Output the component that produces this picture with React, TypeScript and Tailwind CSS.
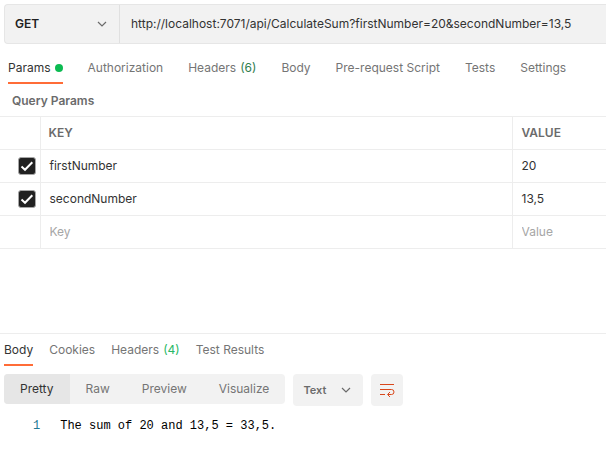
import React, { useState } from "react";

type Tab = { label: string; count?: number; dot?: boolean };
type Param = { key: string; value: string };

const requestTabs: Tab[] = [
  { label: "Params", dot: true },
  { label: "Authorization" },
  { label: "Headers", count: 6 },
  { label: "Body" },
  { label: "Pre-request Script" },
  { label: "Tests" },
  { label: "Settings" },
];

const responseTabs: Tab[] = [
  { label: "Body" },
  { label: "Cookies" },
  { label: "Headers", count: 4 },
  { label: "Test Results" },
];

const views = ["Pretty", "Raw", "Preview", "Visualize"];

const params: Param[] = [
  { key: "firstNumber", value: "20" },
  { key: "secondNumber", value: "13,5" },
];

function Chevron() {
  return (
    <svg
      className="pointer-events-none absolute top-1/2 right-3 h-2 w-[10px] -translate-y-1/2"
      viewBox="0 0 10 8"
      fill="none"
      stroke="#6b6b6b"
      strokeWidth="1.2"
      aria-hidden="true"
    >
      <path d="M1 2l4 4 4-4" />
    </svg>
  );
}

function TabButton({
  tab,
  active,
  countClass,
  onSelect,
}: {
  tab: Tab;
  active: boolean;
  countClass: string;
  onSelect: () => void;
}) {
  return (
    <button
      type="button"
      role="tab"
      aria-selected={active}
      onClick={onSelect}
      className={
        active
          ? "flex h-8 items-center gap-1 border-b-2 border-[#ff6c37] pt-[2px] whitespace-nowrap text-[#333333]"
          : "flex h-8 items-center gap-1 border-b-2 border-transparent pt-[2px] whitespace-nowrap text-[#757575]"
      }
    >
      {tab.label}
      {tab.count !== undefined && <span className={countClass}>({tab.count})</span>}
      {tab.dot && <span className="size-2 rounded-full bg-[#0cbb52]" />}
    </button>
  );
}

function ParamRow({ param }: { param: Param }) {
  const [checked, setChecked] = useState(true);
  return (
    <tr className="h-[33px] border-b border-[#ededed]">
      <td className="border-r border-[#ededed] pl-[18px]">
        <label className="relative block size-[18px]">
          <input
            type="checkbox"
            aria-label={`Include ${param.key}`}
            checked={checked}
            onChange={() => setChecked(!checked)}
            className="block size-[18px] appearance-none rounded-[3px] border border-[#a6a6a6] checked:bg-[#212121]"
          />
          {checked && (
            <svg
              className="pointer-events-none absolute inset-0 size-[18px]"
              viewBox="0 0 18 18"
              fill="none"
              stroke="white"
              strokeWidth="2"
              aria-hidden="true"
            >
              <path d="M3.5 9.5l3.5 3.3 7.3-7.6" />
            </svg>
          )}
        </label>
      </td>
      <td className="border-r border-[#ededed] px-[9px]">{param.key}</td>
      <td className="px-[9px]">{param.value}</td>
    </tr>
  );
}

export default function App() {
  const [requestTab, setRequestTab] = useState("Params");
  const [responseTab, setResponseTab] = useState("Body");
  const [view, setView] = useState("Pretty");

  return (
    <main className="overflow-hidden bg-white pt-1 font-['Inter',sans-serif] text-xs leading-4 text-[#333333]">
      <form className="ml-1 flex h-10 rounded-l border border-r-0 border-[#e6e6e6] bg-[#f2f2f2]">
        <div className="relative w-[115px] shrink-0 border-r border-[#e0e0e0]">
          <select
            aria-label="Method"
            className="h-full w-full appearance-none bg-transparent pl-[10px] font-semibold text-[#212121]"
          >
            <option>GET</option>
            <option>POST</option>
          </select>
          <Chevron />
        </div>
        <input
          type="text"
          aria-label="Request URL"
          defaultValue="http://localhost:7071/api/CalculateSum?firstNumber=20&secondNumber=13,5"
          className="min-w-0 flex-1 bg-transparent pl-[11px] outline-none"
        />
      </form>

      <div role="tablist" aria-label="Request" className="mt-2 flex gap-[25px] px-2">
        {requestTabs.map((tab) => (
          <TabButton
            key={tab.label}
            tab={tab}
            active={requestTab === tab.label}
            countClass="text-[#2f7d4f]"
            onSelect={() => setRequestTab(tab.label)}
          />
        ))}
      </div>

      <h2 className="mt-[9px] px-3 font-semibold text-[#6b6b6b]">Query Params</h2>

      <table className="mt-[7px] w-full table-fixed border-collapse border-t border-[#ededed] text-left">
        <colgroup>
          <col className="w-10" />
          <col />
          <col className="w-[94px]" />
        </colgroup>
        <thead>
          <tr className="h-[33px] border-b border-[#ededed] text-[#6b6b6b]">
            <td className="border-r border-[#ededed]" />
            <th className="border-r border-[#ededed] px-2 font-semibold">KEY</th>
            <th className="px-[9px] font-semibold">VALUE</th>
          </tr>
        </thead>
        <tbody>
          {params.map((param) => (
            <ParamRow key={param.key} param={param} />
          ))}
          <tr className="h-[33px] border-b border-[#ededed]">
            <td className="border-r border-[#ededed]" />
            <td className="border-r border-[#ededed] px-[9px]">
              <input
                aria-label="New key"
                placeholder="Key"
                className="block w-full outline-none placeholder:text-[#a6a6a6]"
              />
            </td>
            <td className="px-[9px]">
              <input
                aria-label="New value"
                placeholder="Value"
                className="block w-full outline-none placeholder:text-[#a6a6a6]"
              />
            </td>
          </tr>
        </tbody>
      </table>

      <section className="mt-[84px] border-t border-[#ededed]">
        <div role="tablist" aria-label="Response" className="flex gap-4 px-1">
          {responseTabs.map((tab) => (
            <TabButton
              key={tab.label}
              tab={tab}
              active={responseTab === tab.label}
              countClass="text-[#29b866]"
              onSelect={() => setResponseTab(tab.label)}
            />
          ))}
        </div>

        <div className="mt-2 flex items-start gap-2 px-1">
          <div className="flex h-[30px] overflow-hidden rounded bg-[#f2f2f2]">
            {views.map((name) => (
              <button
                key={name}
                type="button"
                aria-pressed={view === name}
                onClick={() => setView(name)}
                className={
                  view === name ? "bg-[#e6e6e6] px-4 text-[#333333]" : "px-4 text-[#757575]"
                }
              >
                {name}
              </button>
            ))}
          </div>
          <div className="relative h-8 w-[70px] rounded bg-[#f2f2f2]">
            <select
              aria-label="Format"
              className="h-full w-full appearance-none bg-transparent pl-[10px] text-[11px] font-semibold text-[#6b6b6b]"
            >
              <option>Text</option>
              <option>JSON</option>
            </select>
            <Chevron />
          </div>
          <button
            type="button"
            aria-label="Wrap lines"
            className="flex size-8 items-center justify-center rounded bg-[#f2f2f2]"
          >
            <svg
              className="size-4"
              viewBox="0 0 16 16"
              fill="none"
              stroke="#d9481c"
              aria-hidden="true"
            >
              <path d="M1 2.5h14M1 7.5h11.5a2.5 2.5 0 0 1 0 5H9M1 12.5h5M11 10l-2.5 2.5L11 15" />
            </svg>
          </button>
        </div>

        <pre className="mt-3 flex gap-5 pl-[33px] font-['Liberation_Mono',monospace] text-xs leading-4 text-black">
          <span className="text-[#237893]">1</span>
          <code className="font-['Liberation_Mono',monospace]">The sum of 20 and 13,5 = 33,5.</code>
        </pre>
      </section>
    </main>
  );
}
